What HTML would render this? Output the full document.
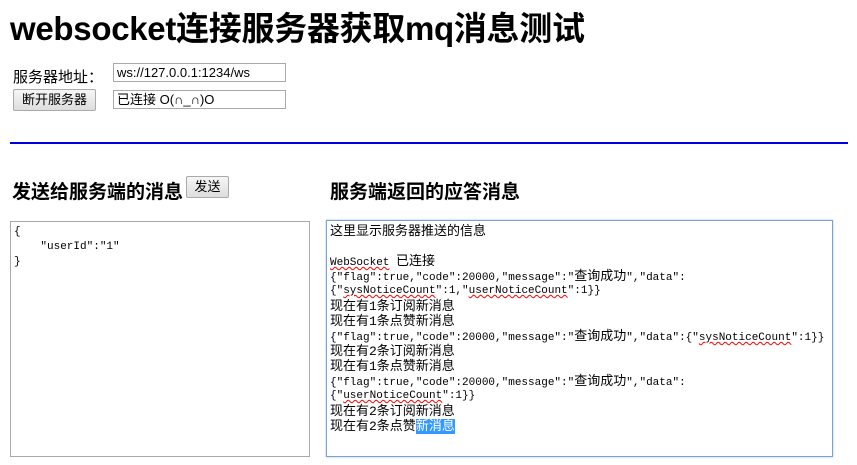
<!DOCTYPE html>
<html><head><meta charset="utf-8"><style>
body{margin:0;width:857px;height:465px;background:#fff;font-family:"Liberation Sans","Noto Sans CJK SC",sans-serif;position:relative;overflow:hidden;color:#000}
.a{position:absolute;white-space:nowrap}
h1{position:absolute;left:10px;top:2px;margin:0;font-size:33px;font-weight:bold;letter-spacing:-0.3px}
.inp{position:absolute;border:1px solid #a9a9a9;height:19px;box-sizing:border-box;font-size:13px;line-height:17px;padding-left:3px;width:173px;left:113px}
.btn{position:absolute;border:1px solid #aaa;border-radius:2px;background:linear-gradient(#f6f6f6,#dddddd);font-size:13px;box-sizing:border-box;text-align:center}
.ta{position:absolute;box-sizing:border-box;font-family:"Liberation Mono","Noto Sans CJK SC",monospace;font-size:11px;padding:3px 3px 2px;white-space:normal}
.ta div{height:15px;line-height:15px;white-space:pre;overflow:visible}
.c{font-size:13px}
h2{position:absolute;margin:0;font-size:19px;font-weight:bold}
.u{text-decoration:underline wavy red;text-decoration-thickness:1px}
.sel{background:#3399ff;color:#fff}
</style></head><body>
<h1>websocket连接服务器获取mq消息测试</h1>
<div class="a" style="left:13px;top:66px;font-size:15px">服务器地址：</div>
<div class="inp" style="top:63px">ws://127.0.0.1:1234/ws</div>
<div class="btn" style="left:13px;top:89px;width:83px;height:22px;line-height:20px">断开服务器</div>
<div class="inp" style="top:90px">已连接 O(∩_∩)O</div>
<div class="a" style="left:10px;top:142px;width:838px;height:2px;background:#0000e0"></div>
<h2 style="left:12px;top:177px">发送给服务端的消息</h2>
<div class="btn" style="left:186px;top:176px;width:43px;height:22px;line-height:20px">发送</div>
<h2 style="left:330px;top:177px">服务端返回的应答消息</h2>
<div class="ta" style="left:10px;top:221px;width:300px;height:236px;border:1px solid #a9a9a9"><div>{</div><div>    "userId":"1"</div><div>}</div></div>
<div class="ta" style="left:326px;top:220px;width:507px;height:237px;border:1px solid #7da2ce;box-shadow:0 0 2px #9ec2ee">
<div class="c">这里显示服务器推送的信息</div>
<div></div>
<div><span class="u">WebSocket</span> <span class="c">已连接</span></div>
<div>{"flag":true,"code":20000,"message":"<span class="c">查询成功</span>","data":</div>
<div>{"<span class="u">sysNoticeCount</span>":1,"<span class="u">userNoticeCount</span>":1}}</div>
<div class="c">现在有1条订阅新消息</div>
<div class="c">现在有1条点赞新消息</div>
<div>{"flag":true,"code":20000,"message":"<span class="c">查询成功</span>","data":{"<span class="u">sysNoticeCount</span>":1}}</div>
<div class="c">现在有2条订阅新消息</div>
<div class="c">现在有1条点赞新消息</div>
<div>{"flag":true,"code":20000,"message":"<span class="c">查询成功</span>","data":</div>
<div>{"<span class="u">userNoticeCount</span>":1}}</div>
<div class="c">现在有2条订阅新消息</div>
<div class="c">现在有2条点赞<span class="sel">新消息</span></div>
</div>
</body></html>
